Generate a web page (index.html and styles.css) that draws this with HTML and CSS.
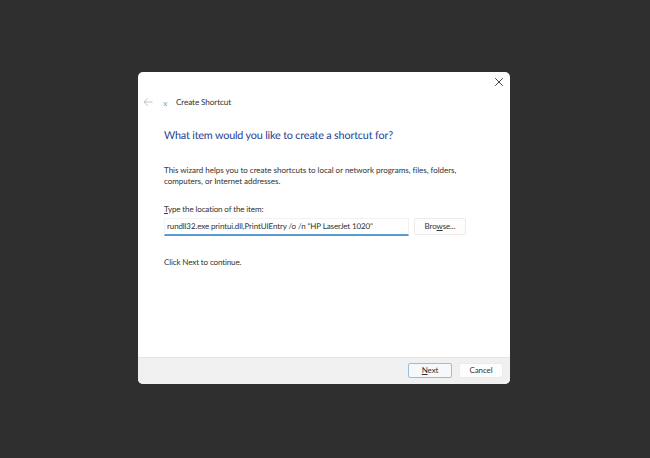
FILE: index.html
```html
<!DOCTYPE html>
<html lang="en">
<head>
<meta charset="utf-8">
<title>Create Shortcut</title>
<link rel="stylesheet" href="styles.css">
</head>
<body>
<div class="dialog">
  <div class="titlebar">
    <svg class="close" width="10" height="10" viewBox="0 0 10 10"><path d="M1.2 1.2 8.8 8.8M8.8 1.2 1.2 8.8" stroke="#444" stroke-width="1" fill="none"/></svg>
  </div>
  <div class="nav">
    <svg class="back" width="10" height="10" viewBox="0 0 10 10"><path d="M9.5 5H1M4.6 1.2.9 5l3.7 3.8" stroke="#c0c0c0" stroke-width="1" fill="none"/></svg>
    <svg class="appicon" width="5" height="6" viewBox="0 0 5 6"><path d="M.8 1.2 4 5M4 1.2.8 5" stroke="#7fa6c4" stroke-width="1" fill="none"/></svg>
    <span class="navtitle">Create Shortcut</span>
  </div>
  <div class="content">
    <h1 class="heading">What item would you like to create a shortcut for?</h1>
    <p class="intro">This wizard helps you to create shortcuts to local or network programs, files, folders, computers, or Internet addresses.</p>
    <label class="label"><u>T</u>ype the location of the item:</label>
    <div class="field-row">
      <div class="field">rundll32.exe printui.dll,PrintUIEntry /o /n "HP LaserJet 1020"</div>
      <button class="btn browse">Bro<u>w</u>se...</button>
    </div>
    <p class="hint">Click Next to continue.</p>
  </div>
  <div class="footer">
    <button class="btn primary"><u>N</u>ext</button>
    <button class="btn">Cancel</button>
  </div>
</div>
</body>
</html>
```
FILE: styles.css
```css
* { box-sizing: border-box; }
html, body { height: 100%; }
body {
  margin: 0;
  background: #2f2f2f;
  padding: 72px 0 0 138px;
  font-family: Lato, "Open Sans", sans-serif;
  font-size: 8px;
  letter-spacing: -0.12px;
  color: #333;
  text-rendering: geometricPrecision;
  overflow: hidden;
}
.dialog {
  width: 372px;
  height: 312px;
  background: #fff;
  border-radius: 5px;
  overflow: hidden;
  display: flex;
  flex-direction: column;
}
.titlebar {
  height: 21px;
  display: flex;
  justify-content: flex-end;
  align-items: flex-end;
  padding-right: 6px;
}
.close { display: block; margin-bottom: 6px; }
.nav {
  height: 17px;
  display: flex;
  align-items: center;
  padding-left: 5px;
}
.back { margin-right: 10px; }
.appicon { margin-right: 8px; margin-top: 4px; }
.navtitle { font-size: 8.2px; }
.content { flex: 1; padding: 0 25px 0 26px; }
.heading {
  margin: 18px 0 0;
  font-size: 10.8px;
  letter-spacing: -0.17px;
  font-weight: 400;
  line-height: 16px;
  color: #1d4290;
}
.intro {
  margin: 21px 0 0;
  line-height: 11px;
  width: 310px;
  letter-spacing: -0.02px;
}
.label { display: block; margin-top: 17px; line-height: 11px; }
.field-row { display: flex; align-items: flex-start; margin-top: 3px; gap: 5px; }
.field {
  width: 245px;
  height: 18px;
  border: 1px solid #f2f2f2;
  border-bottom: 2px solid #5a9bd0;
  padding: 0 2px;
  line-height: 14px;
  white-space: nowrap;
  overflow: hidden;
}
.btn {
  width: 52px;
  height: 17px;
  padding: 0;
  background: #fdfdfd;
  border: 1px solid #ebebeb;
  border-radius: 2px;
  font: inherit;
  letter-spacing: inherit;
  color: #333;
  line-height: 13px;
}
.hint { margin: 21px 0 0; line-height: 11px; }
.footer {
  height: 27px;
  background: #f0f0f0;
  border-top: 1px solid #e6e6e6;
  display: flex;
  justify-content: flex-end;
  align-items: flex-start;
  gap: 7px;
  padding: 5px 7px 0 0;
}
.footer .btn { width: 44px; height: 15px; }
.footer .primary { border: 1px solid #9dbdd3; background: #f5f9fc; }
```
